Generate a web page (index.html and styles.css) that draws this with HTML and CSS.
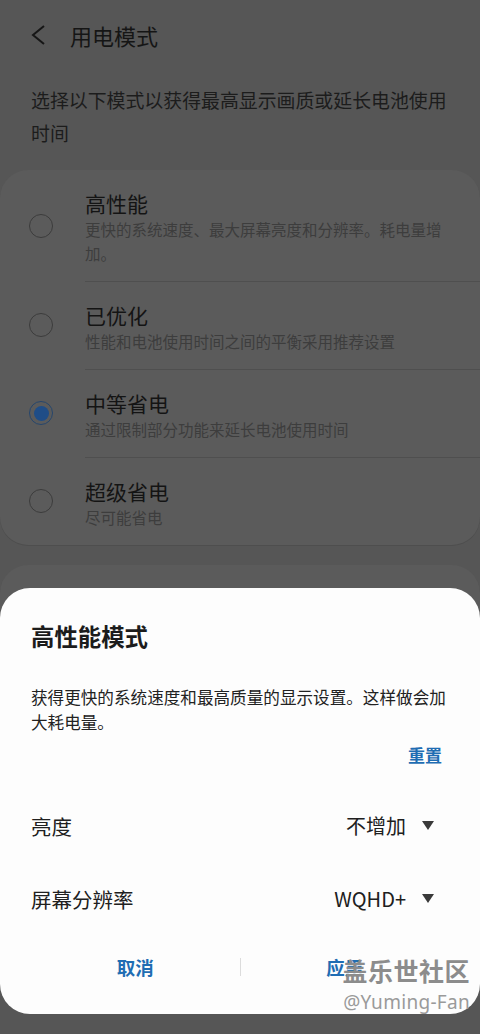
FILE: index.html
```html
<!DOCTYPE html>
<html lang="zh-CN">
<head>
    <meta charset="UTF-8">
    <meta name="viewport" content="width=device-width, initial-scale=1.0">
    <title>用电模式</title>
    <link rel="stylesheet" href="styles.css">
</head>
<body>
    <div class="screen">
        <header class="app-bar">
            <svg class="back" width="16" height="20" viewBox="0 0 16 20">
                <path d="M13 1 L2 10 L13 19" fill="none" stroke="#161616" stroke-width="2" stroke-linejoin="miter"/>
            </svg>
            <h1>用电模式</h1>
        </header>

        <p class="intro">选择以下模式以获得最高显示画质或延长电池使用时间</p>

        <div class="card">
            <div class="mode">
                <span class="radio"></span>
                <div class="mode-text">
                    <div class="mode-title">高性能</div>
                    <div class="mode-sub">更快的系统速度、最大屏幕亮度和分辨率。耗电量增加。</div>
                </div>
            </div>
            <div class="mode">
                <span class="radio"></span>
                <div class="mode-text">
                    <div class="mode-title">已优化</div>
                    <div class="mode-sub">性能和电池使用时间之间的平衡采用推荐设置</div>
                </div>
            </div>
            <div class="mode">
                <span class="radio checked"></span>
                <div class="mode-text">
                    <div class="mode-title">中等省电</div>
                    <div class="mode-sub">通过限制部分功能来延长电池使用时间</div>
                </div>
            </div>
            <div class="mode">
                <span class="radio"></span>
                <div class="mode-text">
                    <div class="mode-title">超级省电</div>
                    <div class="mode-sub">尽可能省电</div>
                </div>
            </div>
        </div>

        <div class="card card-more"></div>

        <!-- bottom sheet dialog -->
        <div class="dialog">
            <h2>高性能模式</h2>
            <p class="dialog-body">获得更快的系统速度和最高质量的显示设置。这样做会加大耗电量。</p>
            <div class="reset">重置</div>

            <div class="setting">
                <span>亮度</span>
                <span class="dropdown">不增加<i class="caret"></i></span>
            </div>
            <div class="setting">
                <span>屏幕分辨率</span>
                <span class="dropdown">WQHD+<i class="caret"></i></span>
            </div>

            <div class="actions">
                <button class="btn">取消</button>
                <span class="sep"></span>
                <button class="btn">应用</button>
            </div>
        </div>

        <div class="watermark">
            <div class="wm-big">盖乐世社区</div>
            <div class="wm-small">@Yuming-Fan</div>
        </div>
    </div>
</body>
</html>
```

FILE: styles.css
```css
html, body {
    margin: 0;
    height: 100%;
    overflow: hidden;
}
body {
    font-family: "Noto Sans CJK SC", "Noto Sans", sans-serif;
    background: #565656;
}
.screen {
    position: relative;
    height: 1034px;
}
.app-bar {
    height: 70px;
    display: flex;
    align-items: center;
    padding-left: 31px;
}
.back {
    display: block;
}
.app-bar h1 {
    margin: 0 0 0 23px;
    font-size: 22px;
    font-weight: 400;
    color: #151515;
}
.intro {
    margin: 13px 31px 0;
    font-size: 18.9px;
    line-height: 33px;
    color: #1c1c1c;
}
.card {
    margin-top: 21px;
    background: #5b5b5b;
    border-radius: 28px;
    box-shadow: 0 1px 0 #4e4e4e;
}
.mode {
    display: flex;
    align-items: center;
    padding-left: 29px;
}
.radio {
    flex: none;
    width: 22px;
    height: 22px;
    border: 1.5px solid #3c3c3c;
    border-radius: 50%;
    margin-right: 32px;
    box-sizing: content-box;
    position: relative;
}
.radio.checked {
    border-color: #26466c;
}
.radio.checked::after {
    content: "";
    position: absolute;
    left: 3.5px;
    top: 3.5px;
    width: 15px;
    height: 15px;
    border-radius: 50%;
    background: #1f4d87;
}
.mode-text {
    flex: 1;
    padding: 20px 30px 16px 0;
}
.mode + .mode .mode-text {
    border-top: 1px solid #4f4f4f;
}
.mode-title {
    font-size: 21px;
    line-height: 27px;
    color: #141414;
}
.mode-sub {
    font-size: 15.5px;
    line-height: 24px;
    color: #3d3d3d;
}
.card-more {
    margin-top: 20px;
    height: 120px;
}

.dialog {
    position: absolute;
    left: 0;
    right: 0;
    top: 588px;
    height: 426px;
    box-sizing: border-box;
    background: #fdfdfd;
    border-radius: 30px;
    padding: 32px 31px 0;
}
.dialog h2 {
    margin: 0;
    font-size: 23.4px;
    line-height: 32px;
    font-weight: 700;
    color: #1c1c1c;
}
.dialog-body {
    margin: 33px 0 0;
    font-size: 16.6px;
    line-height: 25px;
    color: #222;
}
.reset {
    margin-top: 8px;
    text-align: right;
    padding-right: 7px;
    font-size: 17px;
    line-height: 24px;
    font-weight: 700;
    color: #1f6db3;
}
.setting {
    height: 73px;
    display: flex;
    align-items: center;
    justify-content: space-between;
    font-size: 20.5px;
    color: #202020;
}
.reset + .setting {
    margin-top: 22px;
}
.dropdown {
    display: flex;
    align-items: center;
    padding-right: 15px;
    font-size: 20px;
}
.caret {
    margin-left: 16px;
    width: 0;
    height: 0;
    border-left: 6.5px solid transparent;
    border-right: 6.5px solid transparent;
    border-top: 9px solid #3a3a3a;
}
.actions {
    margin-top: 8px;
    height: 48px;
    display: flex;
    align-items: center;
}
.btn {
    flex: 1;
    background: none;
    border: 0;
    padding: 0;
    font-family: inherit;
    font-size: 18.5px;
    font-weight: 700;
    color: #1f6db3;
}
.sep {
    width: 1px;
    height: 18px;
    background: #dcdcdc;
}

.watermark {
    position: absolute;
    right: 10px;
    top: 954px;
    text-align: right;
}
.wm-big {
    font-size: 25px;
    line-height: 32px;
    font-weight: 700;
    color: #8c8c8c;
    letter-spacing: 0.5px;
    text-shadow: 1px 1px 0 rgba(255,255,255,0.8);
}
.wm-small {
    margin-top: 4px;
    font-family: "Noto Sans", sans-serif;
    font-size: 19px;
    line-height: 24px;
    color: #9a9a9a;
    letter-spacing: 0.3px;
}
```
